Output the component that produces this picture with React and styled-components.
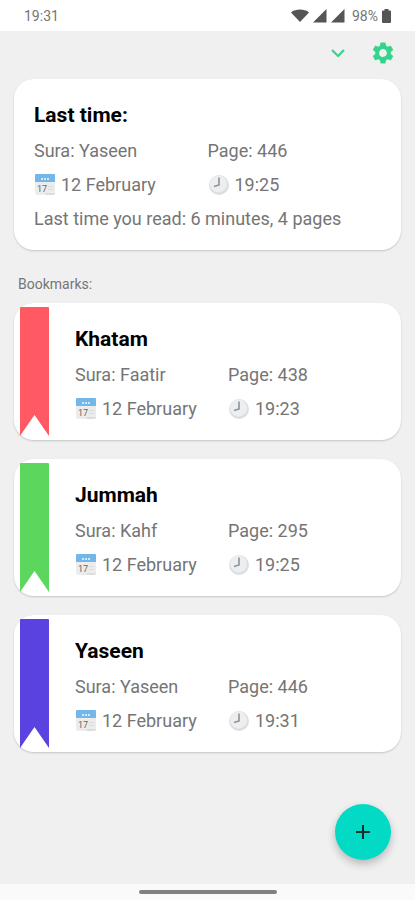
import styled, { createGlobalStyle } from "styled-components"

const GlobalStyle = createGlobalStyle`
    *{
        box-sizing: border-box;
    }
    body{
        margin: 0;
        background-color: #f0f0f0;
        font-family: Roboto, "Liberation Sans", sans-serif;
        color: #757575;
    }
`;

const Page = styled.div`
    min-height: 100vh;
    display: flex;
    flex-direction: column;
`;

const StatusBar = styled.header`
    height: 31px;
    padding: 1px 24px 0;
    display: flex;
    align-items: center;
    justify-content: space-between;
    background-color: white;
    font-size: 14px;
`;

const StatusIcons = styled.div`
    display: flex;
    align-items: center;
    gap: 4px;
`;

const Battery = styled.span`
    margin-left: 3px;
`;

const Toolbar = styled.div`
    height: 48px;
    padding: 0 18px 4px;
    display: flex;
    align-items: center;
    justify-content: flex-end;
    gap: 17px;
`;

const IconButton = styled.button`
    width: 28px;
    height: 28px;
    padding: 0;
    border: none;
    background: none;
    display: flex;
    align-items: center;
    justify-content: center;
    cursor: pointer;
`;

const Main = styled.main`
    flex: 1;
    padding: 0 14px;
`;

const Card = styled.article`
    display: flex;
    background-color: white;
    border-radius: 20px;
    box-shadow: 0 1px 2px rgba(0,0,0,0.18);
`;

const Ribbon = styled.svg`
    flex: none;
    width: 29px;
    height: 129px;
    margin: 4px 6px 4px;
`;

const CardBody = styled.div`
    flex: 1;
    padding: 22px 20px 19px;
    display: flex;
    flex-direction: column;
    gap: 10px;
`;

const Title = styled.h2`
    margin: 0;
    font-size: 21px;
    font-weight: 700;
    line-height: 28px;
    color: black;
`;

const Row = styled.div`
    display: grid;
    grid-template-columns: 1fr 1fr;
`;

const Text = styled.p`
    margin: 0;
    display: flex;
    align-items: center;
    gap: 5px;
    font-size: 18px;
    line-height: 24px;
    white-space: nowrap;
`;

const SectionTitle = styled.h3`
    margin: 25px 0 10px 4px;
    font-size: 14px;
    font-weight: 400;
    line-height: 18px;
`;

const List = styled.div`
    display: flex;
    flex-direction: column;
    gap: 19px;
`;

const AddButton = styled.button`
    position: fixed;
    right: 24px;
    bottom: 40px;
    width: 56px;
    height: 56px;
    padding: 0;
    border: none;
    border-radius: 50%;
    background-color: #03dac5;
    box-shadow: 0 4px 8px rgba(0,0,0,0.24);
    display: flex;
    align-items: center;
    justify-content: center;
    cursor: pointer;
`;

const NavBar = styled.footer`
    height: 16px;
    display: flex;
    align-items: center;
    justify-content: center;
    background-color: #fafafa;
`;

const Handle = styled.div`
    width: 138px;
    height: 4px;
    border-radius: 2px;
    background-color: #808080;
`;

const WifiIcon = () => (
    <svg width="18" height="14" viewBox="0 0 18 14" fill="#555">
        <path d="M9 13 0 3.4C5 -.4 13 -.4 18 3.4Z"/>
    </svg>
)

const SignalIcon = () => (
    <svg width="14" height="14" viewBox="0 0 14 14" fill="#555">
        <path d="M13.5 0v13.5H0Z"/>
    </svg>
)

const BatteryIcon = () => (
    <svg width="9" height="14" viewBox="0 0 9 14" fill="#555">
        <path d="M2.5 0h4v1.5H8a1 1 0 0 1 1 1V13a1 1 0 0 1-1 1H1a1 1 0 0 1-1-1V2.5a1 1 0 0 1 1-1h1.5Z"/>
    </svg>
)

const ChevronIcon = () => (
    <svg width="28" height="28" viewBox="0 0 28 28" fill="none" stroke="#34d58b" strokeWidth="2.2">
        <path d="m8 11 6 6 6-6"/>
    </svg>
)

const GearIcon = () => (
    <svg width="26" height="26" viewBox="0 0 24 24" fill="#34d58b">
        <path d="M19.14 12.94c.04-.3.06-.61.06-.94 0-.32-.02-.64-.07-.94l2.03-1.58a.49.49 0 0 0 .12-.61l-1.92-3.32a.488.488 0 0 0-.59-.22l-2.39.96c-.5-.38-1.03-.7-1.62-.94l-.36-2.54a.484.484 0 0 0-.48-.41h-3.84c-.24 0-.43.17-.47.41l-.36 2.54c-.59.24-1.13.57-1.62.94l-2.39-.96c-.22-.08-.47 0-.59.22L2.74 8.87c-.12.21-.08.47.12.61l2.03 1.58c-.05.3-.09.63-.09.94s.02.64.07.94l-2.03 1.58a.49.49 0 0 0-.12.61l1.92 3.32c.12.22.37.29.59.22l2.39-.96c.5.38 1.03.7 1.62.94l.36 2.54c.05.24.24.41.48.41h3.84c.24 0 .44-.17.47-.41l.36-2.54c.59-.24 1.13-.56 1.62-.94l2.39.96c.22.08.47 0 .59-.22l1.92-3.32c.12-.22.07-.47-.12-.61l-2.01-1.58zM12 15.6A3.61 3.61 0 0 1 8.4 12c0-1.98 1.62-3.6 3.6-3.6s3.6 1.62 3.6 3.6-1.62 3.6-3.6 3.6z"/>
    </svg>
)

const CalendarIcon = () => (
    <svg width="22" height="22" viewBox="0 0 22 22">
        <path fill="#ececec" d="M1 8h20v11a2 2 0 0 1-2 2H3a2 2 0 0 1-2-2Z"/>
        <path fill="#dcdcdc" d="M12 19h9a2 2 0 0 1-2 2h-7Z"/>
        <path fill="#72b6ea" d="M2 0h18a1 1 0 0 1 1 1v7H1V1a1 1 0 0 1 1-1Z"/>
        <path fill="none" stroke="#d3e9f9" strokeWidth="2" d="M7 5h2m1 0h2m1 0h2"/>
        <text x="3" y="18" fontSize="9" fill="#666">17</text>
        <path stroke="#dcdcdc" d="M14 12.500h5M14 15.500h5"/>
    </svg>
)

const ClockIcon = () => (
    <svg width="22" height="22" viewBox="0 0 22 22">
        <circle cx="11" cy="11" r="10" fill="#dcdfe1"/>
        <circle cx="10.5" cy="10" r="8.500" fill="#eceeef"/>
        <path fill="none" stroke="#8d9398" strokeWidth="1.600" d="M11 3.500V11l-5 1.500"/>
    </svg>
)

const PlusIcon = () => (
    <svg width="14" height="14" viewBox="0 0 14 14" stroke="#12302d" strokeWidth="2">
        <path d="M7 0v14M0 7h14"/>
    </svg>
)

const bookmarks = [
    { title: "Khatam", color: "#ff5a64", sura: "Faatir", page: 438, date: "12 February", time: "19:23" },
    { title: "Jummah", color: "#5cd65c", sura: "Kahf", page: 295, date: "12 February", time: "19:25" },
    { title: "Yaseen", color: "#5942df", sura: "Yaseen", page: 446, date: "12 February", time: "19:31" },
]

const Details = ({item}) => {
  return (
    <>
        <Title>{item.title}</Title>
        <Row>
            <Text>Sura: {item.sura}</Text>
            <Text>Page: {item.page}</Text>
        </Row>
        <Row>
            <Text><CalendarIcon/>{item.date}</Text>
            <Text><ClockIcon/>{item.time}</Text>
        </Row>
    </>
  )
}

const Bookmark = ({item}) => {
  return (
    <Card>
        <Ribbon viewBox="0 0 29 129" fill={item.color}>
            <path d="M1 0h27a1 1 0 0 1 1 1v128L14.5 108 0 129V1a1 1 0 0 1 1-1Z"/>
        </Ribbon>
        <CardBody>
            <Details item={item}/>
        </CardBody>
    </Card>
  )
}

const App = () => {
  return (
    <Page>
        <GlobalStyle/>
        <StatusBar>
            <span>19:31</span>
            <StatusIcons>
                <WifiIcon/>
                <SignalIcon/>
                <SignalIcon/>
                <Battery>98%</Battery>
                <BatteryIcon/>
            </StatusIcons>
        </StatusBar>
        <Toolbar>
            <IconButton aria-label="Expand"><ChevronIcon/></IconButton>
            <IconButton aria-label="Settings"><GearIcon/></IconButton>
        </Toolbar>
        <Main>
            <Card>
                <CardBody>
                    <Details item={{ title: "Last time:", sura: "Yaseen", page: 446, date: "12 February", time: "19:25" }}/>
                    <Text>Last time you read: 6 minutes, 4 pages</Text>
                </CardBody>
            </Card>
            <SectionTitle>Bookmarks:</SectionTitle>
            <List>
                {bookmarks.map((item) => (
                    <Bookmark item={item} key={item.title}/>
                ))}
            </List>
        </Main>
        <AddButton aria-label="Add bookmark"><PlusIcon/></AddButton>
        <NavBar>
            <Handle/>
        </NavBar>
    </Page>
  )
}

export default App
